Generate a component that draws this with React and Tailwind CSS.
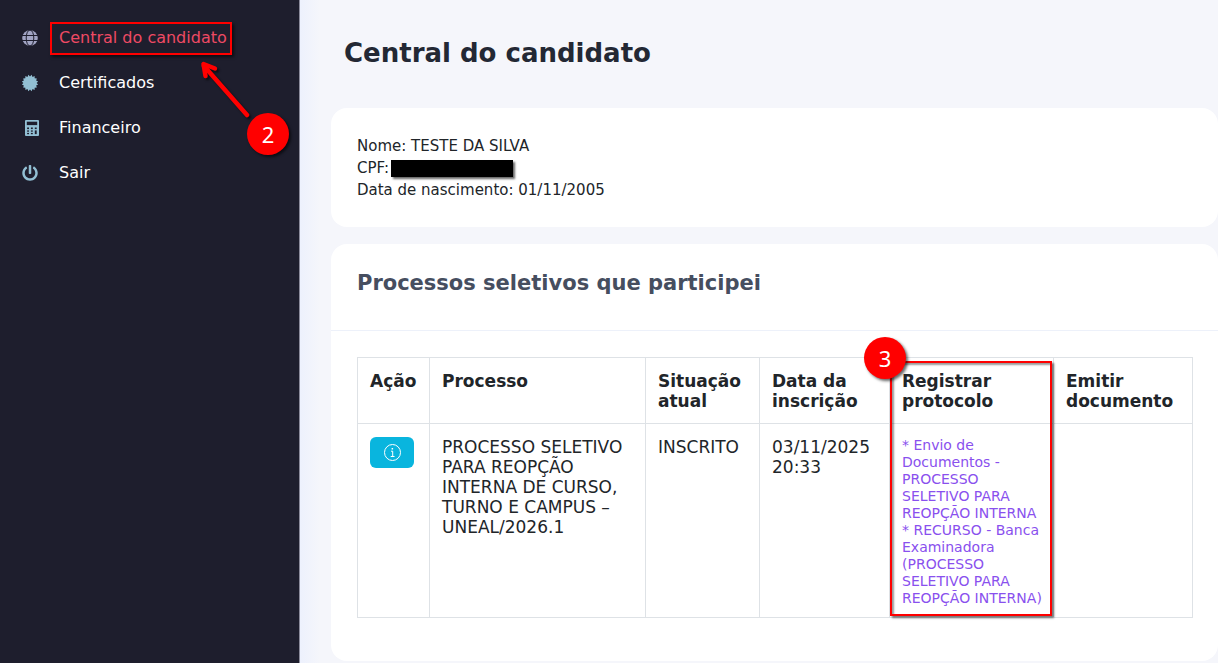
import React from "react";
import { FaPowerOff } from "react-icons/fa";

function GlobeIcon() {
  return (
    <svg viewBox="0 0 16 16" className="size-4" aria-hidden="true">
      <circle cx="8" cy="8" r="7.8" fill="#a2a5c4" />
      <g fill="none" stroke="#1e1e2d" strokeWidth="1">
        <ellipse cx="8" cy="8" rx="3.8" ry="8" />
        <path d="M0 5.5h16M0 10.5h16" />
      </g>
    </svg>
  );
}

function CertificateIcon() {
  const points = Array.from({ length: 32 }, (_, i) => {
    const r = i % 2 === 0 ? 8.3 : 6.6;
    const a = (i * Math.PI) / 16 + Math.PI / 16;
    return `${8 + r * Math.cos(a)},${8 + r * Math.sin(a)}`;
  }).join(" ");
  return (
    <svg viewBox="0 0 16 16" className="size-4 overflow-visible" fill="currentColor" aria-hidden="true">
      <polygon points={points} />
    </svg>
  );
}

function CalculatorIcon() {
  return (
    <svg viewBox="0 0 14 16" className="ml-[3px] h-4 w-3.5" aria-hidden="true">
      <rect width="14" height="16" rx="1" fill="currentColor" />
      <g fill="#1e1e2d">
        <rect x="1.8" y="1.7" width="10.4" height="3.4" />
        <rect x="2.1" y="7.5" width="1.9" height="1.6" />
        <rect x="5.9" y="7.5" width="1.9" height="1.6" />
        <rect x="9.8" y="7.5" width="1.9" height="1.6" />
        <rect x="2.1" y="10.4" width="1.9" height="1.3" />
        <rect x="5.9" y="10.4" width="1.9" height="1.3" />
        <rect x="9.8" y="10.4" width="1.9" height="3.700" />
        <rect x="2.1" y="12.900" width="1.9" height="1.3" />
        <rect x="5.9" y="12.900" width="1.9" height="1.3" />
      </g>
    </svg>
  );
}

function InfoIcon() {
  return (
    <svg viewBox="0 0 17 17" className="size-[17px]" fill="none" stroke="currentColor" aria-hidden="true">
      <circle cx="8.5" cy="8.5" r="8" />
      <path d="M7 7.2h1.7v5.2M6.7 12.5h3.8" />
      <rect x="7.6" y="4" width="1.5" height="1.5" fill="currentColor" stroke="none" />
    </svg>
  );
}

const menu = [
  { label: "Central do candidato", icon: <GlobeIcon />, active: true },
  { label: "Certificados", icon: <CertificateIcon /> },
  { label: "Financeiro", icon: <CalculatorIcon /> },
  { label: "Sair", icon: <FaPowerOff className="size-4" /> },
];

function Badge({ children, className }) {
  return (
    <span
      className={`absolute flex size-[42px] items-center justify-center rounded-full bg-[#ff0000] font-['Noto_Sans',sans-serif] text-[22px] leading-none text-white ${className}`}
    >
      {children}
    </span>
  );
}

function Sidebar() {
  return (
    <aside className="relative w-[300px] shrink-0 border-r border-[#8b8b9b] bg-[#1e1e2d] pt-[15px]">
      <nav>
        <ul>
          {menu.map((item) => (
            <li key={item.label}>
              <a href="#" className="flex h-[45px] items-center pl-[22px] text-[#92bfd3]">
                <span className="flex w-[37px] shrink-0">{item.icon}</span>
                <span className={`relative text-base ${item.active ? "text-[#ee4a64]" : "text-white"}`}>
                  {item.label}
                  {item.active && (
                    <span className="absolute -bottom-[5px] -left-[9px] -right-[5px] -top-1 border-2 border-[#ff0000] shadow-[2px_2px_3px_rgba(0,0,0,0.6)]" />
                  )}
                </span>
              </a>
            </li>
          ))}
        </ul>
      </nav>
      <svg
        viewBox="0 0 52 60"
        className="absolute left-[199px] top-[60px] h-[60px] w-[52px] drop-shadow-[2px_2px_1px_rgba(0,0,0,0.6)]"
        fill="none"
        stroke="#ff0000"
        strokeWidth="4.5"
        strokeLinecap="round"
        strokeLinejoin="round"
        aria-hidden="true"
      >
        <path d="M48 55 5 6" />
        <path d="M16 8.500 4.500 4 6.500 16" />
      </svg>
      <Badge className="left-[247px] top-[113px] shadow-[2px_2px_3px_rgba(0,0,0,0.6)]">2</Badge>
    </aside>
  );
}

function ProcessTable() {
  return (
    <div className="relative">
      <table className="w-full table-fixed border-collapse text-left text-[17px] leading-5 [&_td]:border [&_td]:border-[#dee2e6] [&_td]:pb-[10px] [&_td]:pl-3 [&_td]:pr-2 [&_td]:pt-[13px] [&_td]:align-top [&_th]:border [&_th]:border-[#dee2e6] [&_th]:pb-3 [&_th]:pl-3 [&_th]:pr-2 [&_th]:pt-[13px] [&_th]:align-top">
        <colgroup>
          <col className="w-[72px]" />
          <col />
          <col className="w-[114px]" />
          <col className="w-[130px]" />
          <col className="w-[164px]" />
          <col className="w-[139px]" />
        </colgroup>
        <thead>
          <tr className="h-[66px]">
            <th scope="col">Ação</th>
            <th scope="col">Processo</th>
            <th scope="col">Situação atual</th>
            <th scope="col">Data da inscrição</th>
            <th scope="col">Registrar protocolo</th>
            <th scope="col">Emitir documento</th>
          </tr>
        </thead>
        <tbody>
          <tr>
            <td>
              <button
                type="button"
                aria-label="Informações"
                className="flex h-[31px] w-11 items-center justify-center rounded-md bg-[#09b5de] text-white"
              >
                <InfoIcon />
              </button>
            </td>
            <td>PROCESSO SELETIVO PARA REOPÇÃO INTERNA DE CURSO, TURNO E CAMPUS – UNEAL/2026.1</td>
            <td>INSCRITO</td>
            <td>03/11/2025 20:33</td>
            <td className="text-sm leading-[17px] text-[#8950ee]">
              <a href="#" className="block">* Envio de Documentos - PROCESSO SELETIVO PARA REOPÇÃO INTERNA</a>
              <a href="#" className="block">* RECURSO - Banca Examinadora (PROCESSO SELETIVO PARA REOPÇÃO INTERNA)</a>
            </td>
            <td></td>
          </tr>
        </tbody>
      </table>
      <div className="pointer-events-none absolute bottom-[2px] right-[141px] top-1 w-[162px] border-2 border-[#ff0000] shadow-[2px_2px_2px_rgba(0,0,0,0.55),inset_2px_2px_2px_rgba(0,0,0,0.4)]">
        <Badge className="-left-7 -top-[26px] shadow-[2px_2px_3px_rgba(0,0,0,0.6)]">3</Badge>
      </div>
    </div>
  );
}

export default function App() {
  return (
    <div className="flex min-h-screen bg-[#f5f6fb] font-['DejaVu_Sans',sans-serif] text-[#212529]">
      <Sidebar />
      <main className="min-w-0 flex-1 bg-[linear-gradient(to_right,#edf1fd,#f5f6fb_20px)] pl-[31px]">
        <h1 className="flex h-[108px] items-center pb-0.5 pl-[13px] text-[26px] font-bold text-[#232834]">
          Central do candidato
        </h1>
        <section className="rounded-2xl bg-white px-[26px] pb-[26px] pt-[27px] text-[15px] leading-[22px]">
          <p>Nome: TESTE DA SILVA</p>
          <p className="flex items-center gap-[2px]">
            CPF:
            <span className="h-[17px] w-[122px] bg-black shadow-[2px_2px_2px_rgba(0,0,0,0.6)]" />
          </p>
          <p>Data de nascimento: 01/11/2005</p>
        </section>
        <section className="mt-[17px] rounded-2xl bg-white">
          <h2 className="flex h-[87px] items-center border-b border-[#edf1fa] px-[26px] pb-1.5 text-[21px] font-bold text-[#464e5f]">
            Processos seletivos que participei
          </h2>
          <div className="pb-[43px] pl-[26px] pr-[25px] pt-[26px]">
            <ProcessTable />
          </div>
        </section>
      </main>
    </div>
  );
}
